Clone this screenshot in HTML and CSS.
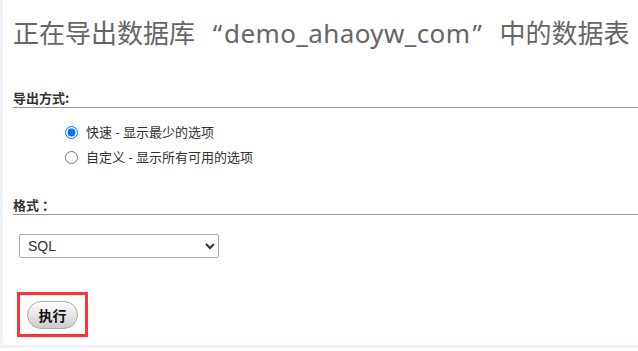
FILE: index.html
```html
<!DOCTYPE html>
<html lang="zh-CN">
<head>
  <meta charset="UTF-8">
  <title>导出</title>
  <link rel="stylesheet" href="styles.css">
</head>
<body>
  <div class="page">
    <h2 class="title">正在导出数据库<span class="q q-open">“</span><span class="db">demo_ahaoyw_com</span><span class="q q-close">”</span>中的数据表</h2>

    <div class="section">
      <h3 class="section-head">导出方式:</h3>
      <ul class="options">
        <li><label><input type="radio" name="method" checked> 快速 - 显示最少的选项</label></li>
        <li><label><input type="radio" name="method"> 自定义 - 显示所有可用的选项</label></li>
      </ul>
    </div>

    <div class="section">
      <h3 class="section-head">格式<span class="colon">：</span></h3>
      <select class="format">
        <option>SQL</option>
      </select>
    </div>

    <div class="actions">
      <div class="highlight">
        <button class="go">执行</button>
      </div>
    </div>
  </div>
</body>
</html>
```

FILE: styles.css
```css
body {
  margin: 0;
  background: #fff;
  font-family: "Noto Sans", "Noto Sans CJK SC", sans-serif;
  color: #444;
}
.page {
  height: 348px;
  border-left: 3px solid #eef3fa;
  border-bottom: 3px solid #eef3fa;
  padding-left: 10px;
  box-sizing: border-box;
  overflow: hidden;
}
.title {
  margin: 0;
  padding-top: 15px;
  font-size: 26px;
  font-weight: normal;
  color: #666;
  line-height: 36px;
  white-space: nowrap;
}
.title .q {
  display: inline-block;
  width: 29px;
}
.title .q-open {
  text-align: right;
  padding-right: 2px;
  box-sizing: border-box;
}
.title .q-close {
  text-align: left;
  padding-left: 2px;
  box-sizing: border-box;
}
.title .db {
  letter-spacing: 0.4px;
}
.section {
  margin-top: 38px;
}
.section + .section {
  margin-top: 26px;
}
.section-head {
  margin: 0;
  font-family: "Noto Sans CJK SC", sans-serif;
  font-size: 13px;
  font-weight: bold;
  color: #333;
  line-height: 18px;
  padding-bottom: 0;
  border-bottom: 1px solid #999;
}
.section-head .colon {
  padding-left: 3px;
}
.options {
  list-style: none;
  margin: 0;
  padding: 12px 0 0 51px;
}
.options li {
  font-size: 13px;
  color: #333;
  line-height: 25px;
  height: 25px;
}
.options label {
  display: flex;
  align-items: center;
}
.options input {
  margin: 0 8px 0 1px;
  width: 13px;
  height: 13px;
}
.format {
  margin: 19px 0 0 6px;
  width: 200px;
  height: 24px;
  font-family: "Liberation Sans", Arial, sans-serif;
  font-size: 14px;
  color: #333;
  background: #fff;
  border: 1px solid #aaa;
  border-radius: 2px;
  padding: 0 4px;
}
.actions {
  margin-top: 34px;
}
.highlight {
  display: inline-block;
  margin-left: 4px;
  border: 3px solid #f33;
  padding: 6px 7px 5px 7px;
}
.go {
  display: block;
  width: 51px;
  height: 28px;
  border: 1px solid #aaa;
  border-radius: 14px;
  background: linear-gradient(to bottom, #fff, #ccc);
  font-family: "Noto Sans CJK SC", sans-serif;
  font-size: 14px;
  font-weight: bold;
  color: #111;
  padding: 0;
}
```
